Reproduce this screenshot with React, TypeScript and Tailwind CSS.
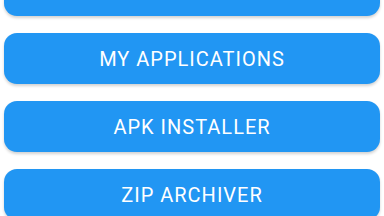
const ITEMS = ["", "MY APPLICATIONS", "APK INSTALLER", "ZIP ARCHIVER"];

export default function App() {
  return (
    <div
      className="h-[216px] w-[384px] overflow-hidden bg-white"
      style={{ fontFamily: "Roboto, 'Liberation Sans', sans-serif" }}
    >
      <div className="-mt-[35px] flex flex-col gap-[17px] px-[4px]">
        {ITEMS.map((label, i) => (
          <button
            key={i}
            className="flex h-[51px] w-full items-center justify-center rounded-[13px] bg-[#2196f3] text-[20px] tracking-[1px] text-white shadow-[0_2px_3px_rgba(0,0,0,0.18)]"
          >
            {label}
          </button>
        ))}
      </div>
    </div>
  );
}
